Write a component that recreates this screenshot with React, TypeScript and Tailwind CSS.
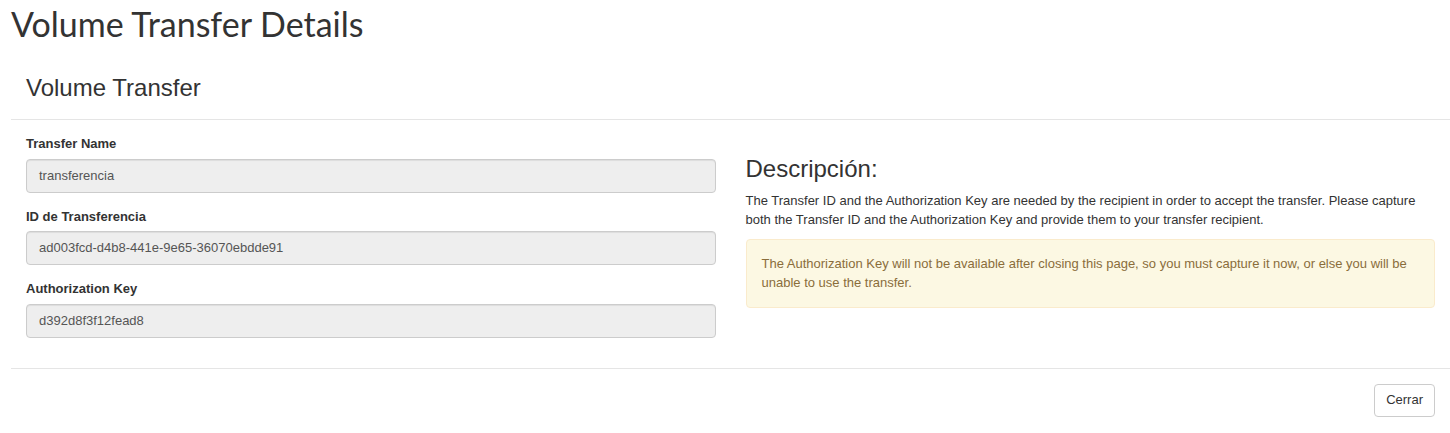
import React from "react";

function Field({ label, value }: { label: string; value: string }) {
  return (
    <div className="mb-[15px]">
      <label className="block font-bold text-[13px] leading-[18.57px] text-[#333] mb-[5px]">{label}</label>
      <div className="h-[34px] w-full rounded-[4px] border border-[#ccc] bg-[#eee] px-[12px] flex items-center text-[13px] text-[#555] shadow-[inset_0_1px_1px_rgba(0,0,0,0.075)]">
        {value}
      </div>
    </div>
  );
}

export default function App() {
  return (
    <div className="bg-white w-[1450px] h-[433px] overflow-hidden text-[#333]" style={{ fontFamily: '"Liberation Sans", Arial, sans-serif' }}>
      <h1 className="pl-[11px] pt-[4px] h-[49px] text-[34px] leading-[40px] text-[#333]" style={{ fontFamily: 'Lato, sans-serif' }}>
        Volume Transfer Details
      </h1>
      <div className="ml-[11px]">
        <div className="px-[15px] h-[71px] border-b border-[#e5e5e5] flex items-center">
          <h3 className="text-[24px] leading-[26px] font-normal text-[#333] pt-[7px]">Volume Transfer</h3>
        </div>
        <div className="px-[15px] pt-[15px] pb-[15px] grid grid-cols-2 gap-[30px]">
          <div>
            <Field label="Transfer Name" value="transferencia" />
            <Field label="ID de Transferencia" value="ad003fcd-d4b8-441e-9e65-36070ebdde91" />
            <Field label="Authorization Key" value="d392d8f3f12fead8" />
          </div>
          <div className="pt-[20px]">
            <h3 className="text-[24px] leading-[28px] text-[#333] mb-[9px]">Descripción:</h3>
            <p className="text-[13px] leading-[18.57px] text-[#333] mb-[10px]">
              The Transfer ID and the Authorization Key are needed by the recipient in order to accept the transfer. Please capture both the Transfer ID and the Authorization Key and provide them to your transfer recipient.
            </p>
            <div className="border border-[#faebcc] bg-[#fcf8e3] text-[#8a6d3b] rounded-[4px] p-[15px] text-[13px] leading-[18.57px]">
              The Authorization Key will not be available after closing this page, so you must capture it now, or else you will be unable to use the transfer.
            </div>
          </div>
        </div>
        <div className="border-t border-[#e5e5e5] px-[15px] pt-[15px] flex justify-end">
          <button className="h-[33px] px-[11px] border border-[#ccc] rounded-[4px] bg-white text-[13px] text-[#333]">Cerrar</button>
        </div>
      </div>
    </div>
  );
}
